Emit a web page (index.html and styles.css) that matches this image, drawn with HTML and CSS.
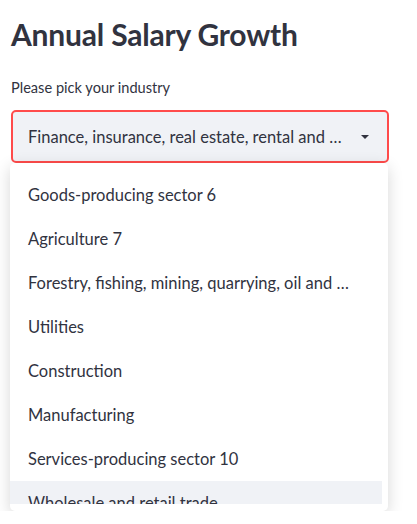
FILE: index.html
```html
<!DOCTYPE html>
<html>
<head>
<meta charset="utf-8">
<link rel="stylesheet" href="styles.css">
</head>
<body>
<div class="page">
  <h1 class="title">Annual Salary Growth</h1>
  <div class="label">Please pick your industry</div>
  <div class="select">
    <span class="select-value">Finance, insurance, real estate, rental and leasing</span>
    <svg class="caret" width="12" height="12" viewBox="0 0 12 12"><path d="M2 4h8L6 8z" fill="rgb(49,51,63)"/></svg>
  </div>
  <div class="menu">
    <ul class="list">
      <li class="item">Goods-producing sector 6</li>
      <li class="item">Agriculture 7</li>
      <li class="item">Forestry, fishing, mining, quarrying, oil and gas 8</li>
      <li class="item">Utilities</li>
      <li class="item">Construction</li>
      <li class="item">Manufacturing</li>
      <li class="item">Services-producing sector 10</li>
      <li class="item active">Wholesale and retail trade</li>
      <li class="item">Transportation and warehousing</li>
    </ul>
  </div>
</div>
</body>
</html>
```

FILE: styles.css
```css
* { box-sizing: border-box; }
html, body { margin: 0; padding: 0; background: #fff; }
body {
  font-family: Lato, "Open Sans", sans-serif;
  color: rgb(49, 51, 63);
}
.page {
  width: 378px;
  margin-left: 11px;
  padding-top: 13px;
}
.title {
  margin: 0;
  font-size: 30px;
  font-weight: 700;
  line-height: 42px;
  letter-spacing: -0.2px;
}
.label {
  margin-top: 23px;
  font-size: 14.6px;
  line-height: 20px;
}
.select {
  margin-top: 12px;
  height: 53px;
  background: rgb(240, 242, 246);
  border: 2px solid rgb(255, 75, 75);
  border-radius: 5px;
  display: flex;
  align-items: center;
  padding: 0 16px 0 15px;
  font-size: 16.5px;
}
.select-value {
  flex: 1;
  min-width: 0;
  white-space: nowrap;
  overflow: hidden;
  text-overflow: ellipsis;
}
.caret { margin-left: 14px; flex: none; }
.menu {
  margin-left: -1px;
  width: 378px;
  height: 348px;
  background: #fff;
  border-radius: 5px;
  box-shadow: 0 4px 16px rgba(0, 0, 0, 0.16);
  padding: 10px 6px 7px 0;
}
.list {
  list-style: none;
  margin: 0;
  padding: 0;
  height: 331px;
  overflow: hidden;
}
.item {
  height: 44px;
  line-height: 44px;
  padding: 0 31px 0 18px;
  font-size: 16.5px;
  white-space: nowrap;
  overflow: hidden;
  text-overflow: ellipsis;
}
.item.active { background: rgb(240, 242, 246); }
```
